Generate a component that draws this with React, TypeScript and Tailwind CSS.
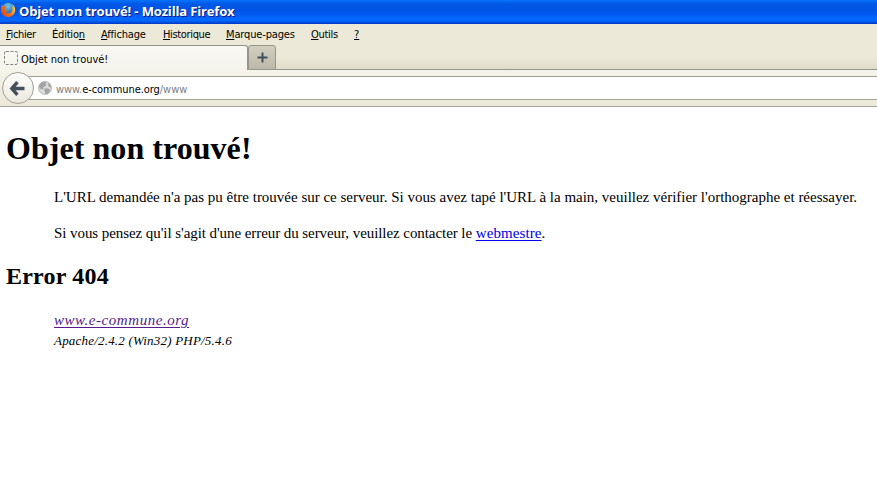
import React from "react";

const tahoma = "font-['DejaVu_Sans_Condensed','DejaVu_Sans',sans-serif] [font-stretch:condensed]";

const menu = [
  { pre: "", key: "F", post: "ichier", cls: "w-[46px] tracking-[-0.35px]" },
  { pre: "Éditio", key: "n", post: "", cls: "w-[49px] tracking-[-0.2px]" },
  { pre: "", key: "A", post: "ffichage", cls: "w-[62px] tracking-[-0.17px]" },
  { pre: "", key: "H", post: "istorique", cls: "w-[63px] tracking-[-0.35px]" },
  { pre: "", key: "M", post: "arque-pages", cls: "w-[85px] tracking-[-0.15px]" },
  { pre: "", key: "O", post: "utils", cls: "w-[43px] tracking-[-0.3px]" },
  { pre: "", key: "?", post: "", cls: "" },
];

function FirefoxLogo() {
  return (
    <svg className="block h-4 w-4 shrink-0" viewBox="0 0 16 16">
      <defs>
        <radialGradient id="globe" cx="0.5" cy="0.25" r="0.7">
          <stop offset="0" stopColor="#6fc8ee" />
          <stop offset="1" stopColor="#14559f" />
        </radialGradient>
        <linearGradient id="fox" x1="0" y1="0.8" x2="1" y2="0.2">
          <stop offset="0" stopColor="#d8401a" />
          <stop offset="0.55" stopColor="#ee7d22" />
          <stop offset="1" stopColor="#ffdc55" />
        </linearGradient>
      </defs>
      <circle cx="8" cy="7.5" r="6.8" fill="url(#globe)" />
      <path
        d="M1.7 2.2 3 4C3.9 3.8 4.6 4.2 5.4 5L6.6 5.4 5.2 6.6 5 8C5.7 8.8 6.8 8.5 7.8 8.8 7.3 9.8 6.4 10.2 5.4 10 7 12 10.6 11.8 11.9 9.4 12.8 7.5 12.5 5.6 11.6 4.2 12.8 4.6 13.2 5.6 13.4 6.3 13.5 4.5 12.6 2.8 11.6 1.9 14 3 15.4 5.6 15.2 8.4 14.9 12.3 11.8 15 8 15 4 15 1 12 .8 8 .7 5.6 1 3.7 1.7 2.2Z"
        fill="url(#fox)"
      />
    </svg>
  );
}

function BackArrow() {
  return (
    <svg className="block h-[17px] w-[17px]" viewBox="0 0 17 17">
      <path d="M8.4 2.2 2.8 8.5 8.4 14.8M3.2 8.5H15.5" fill="none" stroke="#46505c" strokeWidth="3.4" />
    </svg>
  );
}

function GlobeIcon() {
  return (
    <svg className="block h-[14px] w-[14px] shrink-0" viewBox="0 0 14 14">
      <circle cx="7" cy="7" r="6.8" fill="#dadada" />
      <circle cx="7" cy="7" r="6.4" fill="none" stroke="#b0b0b0" strokeWidth="0.8" />
      <path d="M0.8 5 2.6 2 5.4 0.7 8.2 1 7.4 3 8.6 4 6.8 5.6 5 6.2 5.8 7.6 4 8.4 2 7.4ZM10.4 1.8 12.6 4 13.4 6.6 11.4 6 10 4.2ZM6 7.8 9 7.2 11.8 8.4 11.6 10.4 9.4 13 7.4 13.2 7 10.8Z" fill="#a2a2a2" />
    </svg>
  );
}

export default function App() {
  return (
    <div className="flex h-[492px] w-[877px] flex-col overflow-hidden bg-white text-black">
      <header className="flex h-6 shrink-0 items-start bg-[linear-gradient(to_bottom,#0876ff_0px,#036bf5_1px,#0258e6_4px,#0054e3_9px,#0059ee_14px,#0066ff_18px,#0067ff_21px,#0052e0_22px,#0038c4_24px)] pt-[2px]">
        <FirefoxLogo />
        <span className="ml-[3px] whitespace-nowrap font-['Open_Sans',sans-serif] text-[13px] font-bold leading-[19px] tracking-[-0.15px] text-white [text-shadow:1px_1px_0_#0a1883]">
          Objet non trouvé! - Mozilla Firefox
        </span>
      </header>

      <nav className={`flex h-[21px] shrink-0 bg-[#ece9d8] pl-[6px] pt-[4px] text-[11px] leading-[14px] ${tahoma}`}>
        {menu.map((m) => (
          <span key={m.key} className={`shrink-0 whitespace-nowrap ${m.cls}`}>
            {m.pre}
            <span className="underline decoration-1 underline-offset-1">{m.key}</span>
            {m.post}
          </span>
        ))}
      </nav>

      <div className="flex h-[25px] shrink-0 bg-[linear-gradient(to_bottom,#ece9d8_12px,#dedbc9_25px)]">
        <div className="flex w-[248px] shrink-0 items-center rounded-tr-[3px] border-r border-t border-[#96958a] bg-gradient-to-b from-[#f9f8f3] to-[#f5f4ec] pl-[4px]">
          <svg className="block h-[14px] w-[14px] shrink-0" viewBox="0 0 14 14">
            <rect x="0.5" y="0.5" width="13" height="13" rx="1.5" fill="none" stroke="#85847f" strokeDasharray="3 1.5" />
          </svg>
          <span className={`ml-[3px] mt-[3px] whitespace-nowrap text-[11px] leading-[14px] tracking-[-0.02px] ${tahoma}`}>
            Objet non trouvé!
          </span>
        </div>
        <div className="flex h-[25px] w-[28px] shrink-0 items-center justify-center rounded-t-[3px] border border-[#96958a] bg-gradient-to-b from-[#d2cfc0] to-[#bbb8a9]">
          <svg className="block h-[11px] w-[11px]" viewBox="0 0 11 11">
            <path d="M5.5 0.5V10.5M0.5 5.5H10.5" stroke="#42505e" strokeWidth="2" />
          </svg>
        </div>
        <div className="grow border-b border-[#96958a]" />
      </div>

      <div className="flex h-[37px] shrink-0 items-start border-b border-[#a5a394] bg-[linear-gradient(to_bottom,#f5f4ec,#ebe8d8)]">
        <div className="z-10 ml-[2px] mt-[2px] flex h-[32px] w-[32px] shrink-0 items-center justify-center rounded-full border border-[#a3a195] bg-gradient-to-b from-[#fdfdfb] to-[#ebe9dd] pr-[2px]">
          <BackArrow />
        </div>
        <div className="-ml-[6px] mt-[6px] flex h-[24px] grow items-center border-y border-[#a3a195] bg-white pl-[10px]">
          <GlobeIcon />
          <span className={`ml-[4px] mt-[3px] whitespace-nowrap text-[11px] leading-[14px] tracking-[-0.06px] text-[#808080] ${tahoma}`}>
            www.<span className="text-black">e-commune.org</span>/www
          </span>
        </div>
      </div>

      <main className="flex grow flex-col pl-[6px] font-['Liberation_Serif',serif] text-[15px]">
        <h1 className="mt-[22px] whitespace-nowrap text-[32px] font-bold leading-[38px] tracking-[0.05px]">Objet non trouvé!</h1>
        <p className="ml-12 mt-[20px] whitespace-nowrap leading-[20px] tracking-[-0.007px]">
          L'URL demandée n'a pas pu être trouvée sur ce serveur. Si vous avez tapé l'URL à la main, veuillez vérifier l'orthographe et réessayer.
        </p>
        <p className="ml-12 mt-[16px] whitespace-nowrap leading-[20px] tracking-[-0.07px]">
          Si vous pensez qu'il s'agit d'une erreur du serveur, veuillez contacter le{" "}
          <a className="tracking-[0.1px] text-[#0000ee] underline decoration-1 underline-offset-2">webmestre</a>.
        </p>
        <h2 className="mt-[19px] whitespace-nowrap text-[24px] font-bold leading-[28px] tracking-[0.2px]">Error 404</h2>
        <address className="ml-12 mt-[20px] flex flex-col items-start whitespace-nowrap italic">
          <a className="text-[15px] leading-[20px] tracking-[0.55px] text-[#551a8b] underline decoration-1 underline-offset-2">www.e-commune.org</a>
          <span className="mt-[3px] text-[13px] leading-[16px] tracking-[0.2px]">Apache/2.4.2 (Win32) PHP/5.4.6</span>
        </address>
      </main>
    </div>
  );
}
